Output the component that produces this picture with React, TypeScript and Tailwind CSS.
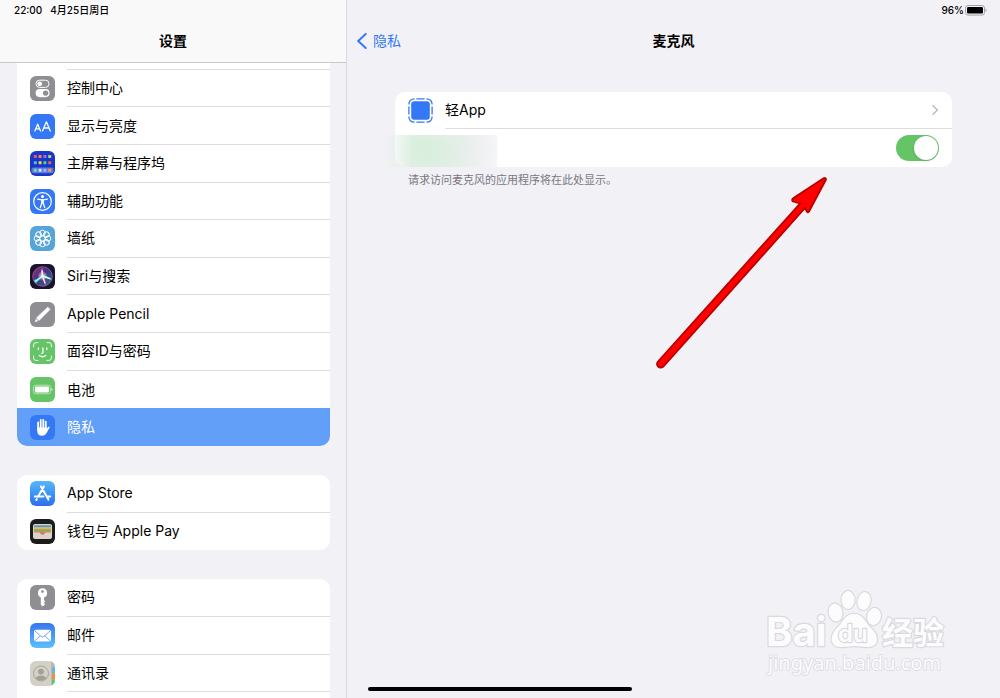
import type { ReactNode } from "react";
import { clsx } from "clsx";

type Item = {
  label: string;
  icon: ReactNode;
  active?: boolean;
};

function Tile({ className, children }: { className: string; children?: ReactNode }) {
  return (
    <svg viewBox="0 0 25 25" className={clsx("size-[25px] shrink-0 rounded-md", className)} aria-hidden="true">
      {children}
    </svg>
  );
}

const homeDots = [
  ["#f0556b", "#ff7b57", "#a06bf0", "#b8d650"],
  ["#5db8f5", "#f5d547", "#5fd17a", "#f0604f"],
  ["#7fd99a", "#c5e8ff", "#b9a6f5", "#f59b4c"],
];

const petals = [0, 45, 90, 135, 180, 225, 270, 315];

const controlIcon = (
  <Tile className="bg-[#8e8e93]">
    <rect x="6" y="4.2" width="13" height="7.2" rx="3.6" fill="none" stroke="#fff" strokeWidth="1" />
    <circle cx="9.7" cy="7.8" r="2.4" fill="#fff" />
    <rect x="5.6" y="13" width="14" height="8.2" rx="4.1" fill="#fff" />
    <circle cx="15.6" cy="17.1" r="2.7" fill="#8e8e93" />
  </Tile>
);

const displayIcon = (
  <Tile className="bg-[#3478f6]">
    <g fill="none" stroke="#fff" strokeWidth="1.3" strokeLinejoin="round" strokeLinecap="round">
      <path d="M4.9 17 7.7 10.2 10.5 17M5.8 14.9h3.8" />
      <path d="M12.5 17 16.4 7.8 20.3 17M13.8 14h5.2" />
    </g>
  </Tile>
);

const homeIcon = (
  <Tile className="bg-[#1836c8]">
    <rect x="1.5" y="16.6" width="22" height="5.6" rx="1.6" fill="#5a7bdc" />
    {homeDots.map((row, y) =>
      row.map((color, x) => (
        <rect
          key={`${x}-${y}`}
          x={3.8 + x * 4.8}
          y={[4, 10.2, 17.8][y]}
          width="3"
          height="3"
          rx="0.6"
          fill={color}
        />
      )),
    )}
  </Tile>
);

const accessIcon = (
  <Tile className="bg-[#3478f6]">
    <circle cx="12.5" cy="12.5" r="8.8" fill="none" stroke="#fff" strokeWidth="1.2" />
    <circle cx="12.5" cy="7.5" r="1.5" fill="#fff" />
    <path
      d="M7.6 10.2 11.8 10.8V14L10.3 18.6M17.4 10.2 13.2 10.8V14L14.7 18.6M12.5 10.5V14"
      fill="none"
      stroke="#fff"
      strokeWidth="1.3"
      strokeLinecap="round"
      strokeLinejoin="round"
    />
  </Tile>
);

const wallpaperIcon = (
  <Tile className="bg-[#56a5d8]">
    <g fill="none" stroke="#fff" strokeWidth="1">
      <circle cx="12.5" cy="12.5" r="2.6" />
      {petals.map((angle) => (
        <circle key={angle} cx="12.5" cy="6.9" r="2.7" transform={`rotate(${angle} 12.5 12.5)`} />
      ))}
    </g>
  </Tile>
);

const siriIcon = (
  <Tile className="bg-[#17142e]">
    <defs>
      <linearGradient id="siri" x1="0" y1="0" x2="1" y2="1">
        <stop offset="0" stopColor="#c43b8e" />
        <stop offset="0.45" stopColor="#5a3f9c" />
        <stop offset="1" stopColor="#22a5b8" />
      </linearGradient>
      <radialGradient id="siriGlow">
        <stop offset="0" stopColor="#fff" />
        <stop offset="1" stopColor="#fff" stopOpacity="0" />
      </radialGradient>
    </defs>
    <circle cx="12.5" cy="12.5" r="9.8" fill="url(#siri)" fillOpacity="0.7" stroke="#b04fa0" strokeWidth="0.8" />
    <path d="M3.4 16.5Q8 14 12.5 12Q9 17 6 19.5Z" fill="#3bc4dc" />
    <path d="M12.5 12Q17 11 22 15.5Q17 15.5 12.5 12Z" fill="#5ce0d2" />
    <path d="M12.5 12Q16.5 16 16 21.5Q12.5 17 12.5 12Z" fill="#ee5d8c" />
    <path d="M12.5 12Q10 8 12 4Q14 8 12.5 12Z" fill="#c9a2ee" />
    <path d="M5 17.5 12.5 12 20.5 15M12.5 12 15 19.5M12.5 12 12.2 6.5" stroke="#fff" strokeWidth="1" fill="none" />
    <circle cx="12.5" cy="12" r="5" fill="url(#siriGlow)" />
  </Tile>
);

const pencilIcon = (
  <Tile className="bg-[#8e8e93]">
    <path d="M17.8 5.2 20 7.4 9 18.4 6.5 15.9Z" fill="#fff" stroke="#fff" strokeWidth="0.8" strokeLinejoin="round" />
    <path d="M5.9 16.7 8.1 18.9 4.8 20.2Z" fill="#fff" />
  </Tile>
);

const faceIcon = (
  <Tile className="bg-[#65c466]">
    <g fill="none" stroke="#fff" strokeLinecap="round" strokeLinejoin="round">
      <path
        d="M3.6 8V6A2.4 2.4 0 0 1 6 3.6H8M17 3.6h2A2.4 2.4 0 0 1 21.4 6V8M21.4 17v2a2.4 2.4 0 0 1-2.4 2.4H17M8 21.4H6A2.4 2.4 0 0 1 3.6 19V17"
        strokeWidth="0.9"
      />
      <path d="M8.4 9v1.6M16.8 9v1.6M12.9 9v4.4q0 .9-1.2.9M9.3 16.6q3.2 2.5 6.4 0" strokeWidth="1.3" />
    </g>
  </Tile>
);

const batteryIcon = (
  <Tile className="bg-[#65c466]">
    <rect x="3.4" y="8.2" width="17.2" height="8.6" rx="2.4" fill="none" stroke="#c8efc8" strokeWidth="0.8" />
    <rect x="4.9" y="9.6" width="14.2" height="5.8" rx="1.3" fill="#fff" />
    <path d="M21.5 11v3q1-.4 1-1.5t-1-1.5Z" fill="#d4f2d4" />
  </Tile>
);

const handIcon = (
  <Tile className="bg-[#3478f6]">
    <g fill="none" stroke="#fff" strokeWidth="1.8" strokeLinecap="round">
      <path d="M8.1 7.4V15M10.7 5V14M13.3 4.8V14M15.8 6.6V15M18.7 12.6 15.4 17.6" />
    </g>
    <path d="M7.2 12.5H16.7V15.5L18 14Q16.6 20.8 12.2 20.8 7.2 20.8 7.2 15.5Z" fill="#fff" />
  </Tile>
);

const storeIcon = (
  <Tile className="bg-gradient-to-b from-[#56b8f8] to-[#2f6df0]">
    <g fill="none" stroke="#fff" strokeWidth="2" strokeLinecap="round">
      <path d="M13.9 5.4 8.1 15.6M11 5.4 18.4 18.6M4.8 15.6H13.4M16.8 15.6H20.2M6.8 18 6.3 18.9" />
    </g>
  </Tile>
);

const walletIcon = (
  <Tile className="bg-[#1c1c1c]">
    <rect x="3" y="5" width="19" height="15" rx="2" fill="#d9d5c9" />
    <path d="M4 8.4V7.4Q4 6.2 5.2 6.2H19.8Q21 6.2 21 7.4V8.4Z" fill="#4a9bd6" />
    <rect x="4" y="8.2" width="17" height="2" fill="#f2b53b" />
    <rect x="4" y="10.2" width="17" height="2" fill="#6cb85c" />
    <path d="M4 12.2H21V13.6H16.2Q15.2 13.6 14.7 14.4 13.9 15.8 12.5 15.8T10.3 14.4Q9.8 13.6 8.8 13.6H4Z" fill="#e8706a" />
  </Tile>
);

const keyIcon = (
  <Tile className="bg-[#8e8e93]">
    <path
      fill="#fff"
      fillRule="evenodd"
      d="M12.5 3.2a4.8 4.8 0 0 0-1.7 9.2V19.8L12.5 21.6 15.2 19.2 13.9 17.8 15.2 16.4 14 15V12.5A4.8 4.8 0 0 0 12.5 3.2ZM12.5 5.2a1.4 1.4 0 1 1 0 2.8 1.4 1.4 0 0 1 0-2.8Z"
    />
  </Tile>
);

const mailIcon = (
  <Tile className="bg-gradient-to-b from-[#3a74f0] to-[#5cc0fa]">
    <rect x="4" y="6.7" width="17" height="11.8" rx="1.8" fill="#fff" />
    <path
      d="M4.4 7.4 11 13.4Q12.5 14.6 14 13.4L20.6 7.4M4.6 18 10.2 12.8M20.4 18 14.8 12.8"
      fill="none"
      stroke="#4c93f4"
      strokeWidth="0.8"
    />
  </Tile>
);

const contactsIcon = (
  <Tile className="bg-[#d3d1c6]">
    <rect x="21" y="0" width="4" height="25" fill="#bab8ae" />
    <rect x="22" y="6.5" width="3" height="5.5" fill="#5fb5f0" />
    <rect x="22" y="12.5" width="3" height="5.5" fill="#f09038" />
    <rect x="22" y="18.5" width="3" height="5" fill="#5dc96a" />
    <circle cx="11" cy="12.5" r="7.5" fill="none" stroke="#a39f96" strokeWidth="0.9" />
    <circle cx="11" cy="10.6" r="2.9" fill="#a39f96" />
    <path d="M5.6 17.2Q7 14.6 11 14.6T16.4 17.2Q14.4 19.6 11 19.6T5.6 17.2Z" fill="#a39f96" />
  </Tile>
);

const general: Item[] = [
  { label: "控制中心", icon: controlIcon },
  { label: "显示与亮度", icon: displayIcon },
  { label: "主屏幕与程序坞", icon: homeIcon },
  { label: "辅助功能", icon: accessIcon },
  { label: "墙纸", icon: wallpaperIcon },
  { label: "Siri与搜索", icon: siriIcon },
  { label: "Apple Pencil", icon: pencilIcon },
  { label: "面容ID与密码", icon: faceIcon },
  { label: "电池", icon: batteryIcon },
  { label: "隐私", icon: handIcon, active: true },
];

const store: Item[] = [
  { label: "App Store", icon: storeIcon },
  { label: "钱包与 Apple Pay", icon: walletIcon },
];

const accounts: Item[] = [
  { label: "密码", icon: keyIcon },
  { label: "邮件", icon: mailIcon },
  { label: "通讯录", icon: contactsIcon },
];

function Row({ item, last }: { item: Item; last: boolean }) {
  return (
    <li className="min-h-0">
      <a
        href="#"
        className={clsx("flex h-full items-center gap-3 pl-[13px]", item.active && "bg-[#629ff8] text-white")}
      >
        {item.icon}
        <span className={clsx("flex h-full flex-1 items-center", !last && "border-b border-[#dddde0]")}>
          {item.label}
        </span>
      </a>
    </li>
  );
}

function Sidebar() {
  return (
    <aside className="flex w-[347px] shrink-0 flex-col border-r border-[#d9d9de]">
      <header className="h-[63px] shrink-0 border-b border-[#c9c9cd] bg-[#f9f9fa]">
        <p className="flex h-5 items-center gap-2 pl-[14px] text-[10px] font-medium">
          <span>22:00</span>
          <span>4月25日周日</span>
        </p>
        <h1 className="flex h-[42px] items-center justify-center text-sm font-semibold">设置</h1>
      </header>
      <nav className="min-h-0 flex-1 overflow-hidden pr-4 pl-[17px]">
        {/* scrolled so that only the lower edge of the first row shows */}
        <ul className="-mt-[31px] grid h-[414px] auto-rows-fr overflow-hidden rounded-[10px] bg-white">
          <Row item={{ label: "", icon: <Tile className="bg-[#8e8e93]" /> }} last={false} />
          {general.map((item, i) => (
            <Row key={item.label} item={item} last={i >= general.length - 2} />
          ))}
        </ul>
        <ul className="mt-[29px] grid h-[75px] auto-rows-fr rounded-[10px] bg-white">
          {store.map((item, i) => (
            <Row key={item.label} item={item} last={i === store.length - 1} />
          ))}
        </ul>
        <ul className="mt-[29px] grid h-[151px] auto-rows-fr rounded-[10px] bg-white">
          {accounts.map((item) => (
            <Row key={item.label} item={item} last={false} />
          ))}
          <li />
        </ul>
      </nav>
    </aside>
  );
}

function Detail() {
  return (
    <main className="relative min-w-0 flex-1">
      <div className="flex h-5 items-center justify-end gap-px pr-[13px] text-[10px] font-medium">
        <span>96%</span>
        <svg viewBox="0 0 22 11" className="h-[11px] w-[22px]" aria-hidden="true">
          <rect x="0.5" y="0.5" width="19" height="9.6" rx="2.6" fill="none" stroke="#a1a1a5" />
          <rect x="2" y="2" width="16" height="6.6" rx="1.4" fill="#000" />
          <path d="M20.6 3.6v3.4q1.1-.5 1.1-1.7t-1.1-1.7Z" fill="#a1a1a5" />
        </svg>
      </div>
      <header className="grid h-[42px] grid-cols-3 items-center">
        <button type="button" className="flex items-center gap-[6px] pl-[10px] text-sm text-[#3478f6]">
          <svg viewBox="0 0 10 16" className="h-4 w-[10px]" aria-hidden="true">
            <path d="M8.7 1 1.2 8l7.5 7" fill="none" stroke="#3478f6" strokeWidth="2" strokeLinecap="round" />
          </svg>
          隐私
        </button>
        <h2 className="text-center text-sm font-semibold">麦克风</h2>
      </header>

      <section className="mx-12 mt-[30px]">
        <div className="relative rounded-[10px] bg-white">
          <a href="#" className="flex h-[37px] items-center gap-3 pl-[13px]">
            <svg viewBox="0 0 25 25" className="size-[25px] shrink-0" aria-hidden="true">
              <rect x="3.2" y="3.2" width="18.6" height="18.6" rx="3" fill="#3478f6" />
              <g fill="none" stroke="#3478f6" strokeWidth="1.3">
                <path d="M8.4.9H16.6M8.4 24.1H16.6M.9 8.4V16.6M24.1 8.4V16.6" />
                <path d="M.9 6.6Q1 1 6.6.9M18.4.9Q24 1 24.1 6.6M24.1 18.4Q24 24 18.4 24.1M6.6 24.1Q1 24 .9 18.4" />
              </g>
            </svg>
            <span className="flex h-full flex-1 items-center justify-between border-b border-[#dddde0] pr-[13px]">
              轻App
              <svg viewBox="0 0 8 12" className="h-3 w-2" aria-hidden="true">
                <path d="M1.5 1.2 6.4 6l-4.9 4.8" fill="none" stroke="#bcbcc0" strokeWidth="1.5" />
              </svg>
            </span>
          </a>
          <div className="flex h-[38px] items-center justify-end pr-[13px]">
            <input
              type="checkbox"
              role="switch"
              aria-label="麦克风"
              defaultChecked
              className="h-[26px] w-[43px] appearance-none rounded-full bg-gray-200 p-px before:block before:size-6 before:rounded-full before:bg-white before:shadow checked:bg-[#65c466] checked:before:ml-[17px]"
            />
          </div>
          <div className="absolute bottom-0 -left-3 h-8 w-[114px] bg-[radial-gradient(75px_55px_at_42px_15px,#d8eedc_0%,#dcefe0_25%,#e8eeea_55%,#f0f1f2_80%,#f6f6f8_100%)] [mask-image:linear-gradient(to_right,transparent,black_25%)]" />
        </div>
        <p className="pt-[5px] pl-[13px] text-[11px] leading-4 text-[#78787d]">
          请求访问麦克风的应用程序将在此处显示。
        </p>
      </section>

      {/* arrow pointing at the switch */}
      <svg
        viewBox="0 0 180 200"
        className="pointer-events-none absolute top-[172px] right-[167px] h-[200px] w-[180px]"
        aria-hidden="true"
      >
        <path
          d="M5 189.5 147 31.5 140 29.5Q138 28 140.5 26L171 6Q173 5.5 173 7.5L156 39.5Q154.500 41.5 153.5 39L152 36 10.5 194.5Q7.5 196.500 5 194.500 3 192 5 189.500Z"
          fill="#fe0000"
          stroke="#b80000"
          strokeWidth="1.8"
          strokeLinejoin="round"
        />
      </svg>

      <svg
        viewBox="0 0 190 96"
        className="pointer-events-none absolute right-[50px] bottom-4 h-24 w-[190px]"
        aria-hidden="true"
      >
        <g fill="#fcfcfd" stroke="#d9d9de" strokeWidth="2.4" paintOrder="stroke" strokeLinejoin="round">
          <ellipse cx="75.5" cy="26.5" rx="6.8" ry="9" transform="rotate(-12 75.500 26.500)" />
          <ellipse cx="88" cy="14" rx="6.5" ry="9" />
          <ellipse cx="104" cy="15" rx="6.5" ry="9" transform="rotate(12 104 15)" />
          <ellipse cx="114" cy="30.5" rx="6.8" ry="8.5" transform="rotate(14 114 30.500)" />
          <path d="M94 28C103 28 105 36 111 42 120 50 119 61 108 61 103 61 99 60 94 60S86 61 81 61C70 61 69 50 77 42 83 36 85 28 94 28Z" />
          <text x="6" y="60" fontFamily="Inter, sans-serif" fontSize="40" fontWeight="700">
            Bai
          </text>
          <text x="78" y="56" fontFamily="Inter, sans-serif" fontSize="24" fontWeight="600">
            du
          </text>
          <text x="122" y="58" fontFamily="'Noto Sans CJK SC', sans-serif" fontSize="31" fontWeight="700">
            经验
          </text>
          <text x="8" y="84" fontFamily="'Noto Sans', sans-serif" fontSize="20" strokeWidth="1.6">
            jingyan.baidu.com
          </text>
        </g>
      </svg>
    </main>
  );
}

export default function App() {
  return (
    <div className="relative flex h-screen overflow-hidden bg-[#f2f1f6] font-[Inter,'Noto_Sans_CJK_SC',sans-serif] text-sm text-black">
      <Sidebar />
      <Detail />
      <div className="absolute bottom-[7px] left-1/2 h-1 w-[264px] -translate-x-1/2 rounded-full bg-black" />
    </div>
  );
}
